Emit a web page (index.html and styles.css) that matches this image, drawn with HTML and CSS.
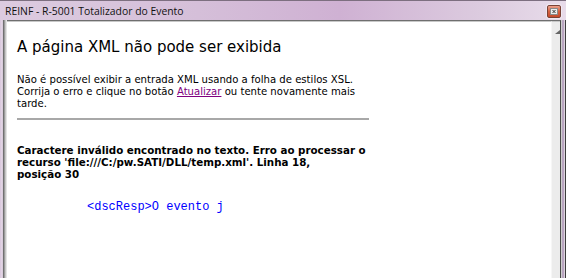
FILE: index.html
```html
<!DOCTYPE html>
<html lang="pt-BR">
  <head>
    <meta charset="UTF-8" />
    <title>REINF - R-5001 Totalizador do Evento</title>
    <link rel="stylesheet" href="styles.css">
  </head>
  <body>
    <div class="window">
      <div class="titlebar">
        <span class="title">REINF - R-5001 Totalizador do Evento</span>
        <button class="close-btn" title="Fechar">
          <svg width="8" height="7" viewBox="0 0 8 7">
            <rect x="0.5" y="0.5" width="7" height="6" fill="#ececec" stroke="#8a8a8a" />
            <path d="M2.5 2 L5.5 5 M5.5 2 L2.5 5" stroke="#333" stroke-width="1" />
          </svg>
        </button>
      </div>
      <div class="body-row">
        <div class="edge-left"></div>
        <div class="frame">
          <div class="page">
            <h1>A página XML não pode ser exibida</h1>
            <p class="intro">
              Não é possível exibir a entrada XML usando a folha de estilos XSL.<br />
              Corrija o erro e clique no botão <a href="#">Atualizar</a> ou tente novamente mais<br />
              tarde.
            </p>
            <hr />
            <p class="error">
              Caractere inválido encontrado no texto. Erro ao processar o<br />
              recurso 'file:///C:/pw.SATI/DLL/temp.xml'. Linha 18,<br />
              posição 30
            </p>
            <pre class="source">&lt;dscResp&gt;O evento j</pre>
          </div>
          <div class="scrollbar">
            <svg class="arrow" width="5" height="4" viewBox="0 0 5 4">
              <path d="M0 4 L5 4 L5 0 Z" fill="#666" />
            </svg>
          </div>
        </div>
        <div class="edge-right"></div>
      </div>
    </div>
  </body>
</html>
```

FILE: styles.css
```css
body {
  margin: 0;
  width: 566px;
  height: 278px;
  overflow: hidden;
  background: #d6c4da;
}
.window {
  display: flex;
  flex-direction: column;
  height: 100%;
}

/* Title bar */
.titlebar {
  height: 20px;
  flex: none;
  display: flex;
  justify-content: space-between;
  align-items: flex-start;
  padding: 0 5px;
  box-sizing: border-box;
  background: linear-gradient(to right, #dccbe0 0%, #d5bfd9 35%, #cfb1d3 60%, #dccbdf 85%, #e8dcea 100%);
  border-top: 1px solid #7d6f80;
}
.title {
  font-family: "Open Sans", sans-serif;
  font-size: 10.4px;
  line-height: 21px;
  color: #111;
}
.close-btn {
  margin-top: 4px;
  width: 14px;
  height: 13px;
  padding: 0;
  border: 1px solid #7a4236;
  border-radius: 2px;
  background: linear-gradient(#eba08c, #d5603f 50%, #c54a2c);
  display: flex;
  justify-content: center;
  align-items: center;
  box-shadow: 0 0 0 1px rgba(255, 255, 255, 0.4);
}

/* Window body */
.body-row {
  flex: 1;
  display: flex;
  min-height: 0;
}
.edge-left {
  width: 7px;
  flex: none;
  background: linear-gradient(to right, #d8c5dc 0, #e4d8e6 2px, #d0c0d4 3px, #707070 3px, #707070 4px, #9c9c9c 4px, #9c9c9c 5px, #c6c6c6 5px, #c6c6c6 6px, #e4e4e4 6px);
}
.edge-right {
  width: 5px;
  flex: none;
  background: linear-gradient(to right, #cfcfcf 0, #cfcfcf 1px, #b9a5c0 1px, #b9a5c0 3px, #dcd2de 3px, #dcd2de 4px, #3c3c3c 4px);
}
.frame {
  flex: 1;
  display: flex;
  border-top: 1px solid #6f6f6f;
  border-right: 1px solid #4a4a4a;
  min-width: 0;
}
.page {
  flex: 1;
  background: #fff;
  border-top: 1px solid #c8c8c8;
  padding: 16px 10px 0;
  font-family: "DejaVu Sans", Verdana, sans-serif;
  color: #000;
  overflow: hidden;
}
.scrollbar {
  width: 9px;
  flex: none;
  background: #ececec;
  border-top: 1px solid #c8c8c8;
  border-left: 1px solid #f6f6f6;
  box-sizing: border-box;
  display: flex;
  justify-content: center;
  align-items: flex-start;
}
.scrollbar .arrow {
  margin-top: 8px;
  margin-left: 2px;
}

/* Error page */
h1 {
  font-size: 15px;
  font-weight: normal;
  line-height: 18px;
  margin: 0 0 18px;
}
.intro {
  font-size: 10.1px;
  line-height: 12.2px;
  margin: 0;
}
.intro a {
  color: #800080;
}
hr {
  width: 352px;
  margin: 7px 0 0;
  border: none;
  border-top: 2px solid #a8a8a8;
  text-align: left;
}
.error {
  font-size: 10.3px;
  font-weight: bold;
  line-height: 12.4px;
  margin: 24px 0 0;
}
.source {
  font-family: "Liberation Mono", "Courier New", monospace;
  font-size: 12px;
  line-height: 14px;
  color: #0000ff;
  margin: 19px 0 0 70px;
}
```
